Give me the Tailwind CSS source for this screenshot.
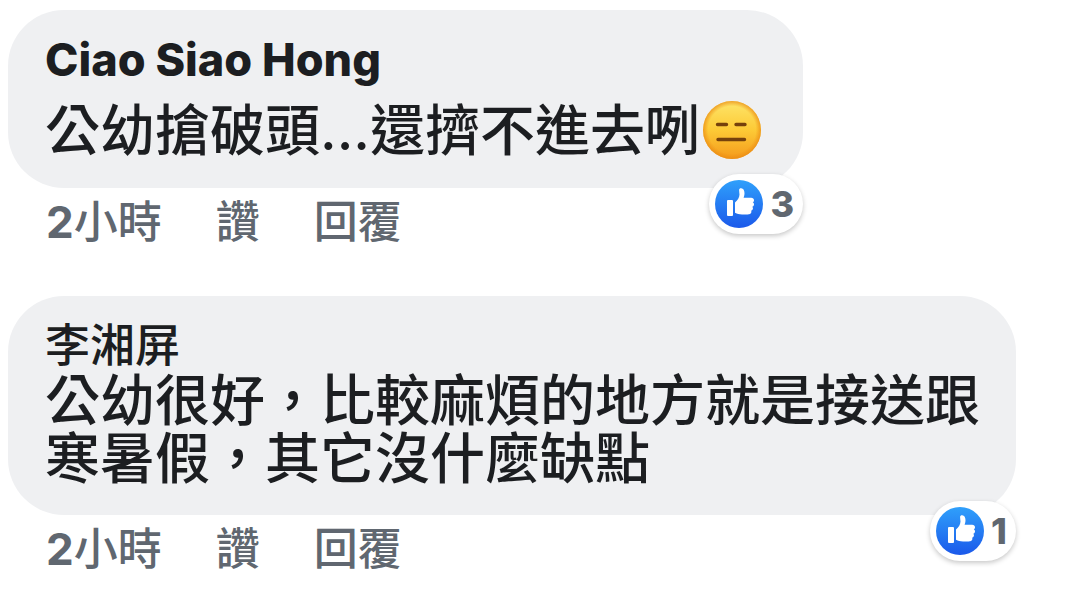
<!DOCTYPE html>
<html lang="zh-Hant">
<head>
  <meta charset="UTF-8" />
  <meta name="viewport" content="width=device-width, initial-scale=1.0"/>
  <title>留言</title>
  <script src="https://cdn.jsdelivr.net/npm/@tailwindcss/browser@4"></script>
</head>
<body class="bg-white font-['Inter','Noto_Sans_CJK_TC',sans-serif] text-[#1c1e21]">

  <!-- Shared icon -->
  <svg class="absolute size-0" aria-hidden="true">
    <defs>
      <linearGradient id="like-bg" x1="0" y1="0" x2="0" y2="1">
        <stop offset="0" stop-color="#2fa0fb"/>
        <stop offset="1" stop-color="#1b59ea"/>
      </linearGradient>
    </defs>
    <symbol id="like" viewBox="0 0 48 48">
      <circle cx="24" cy="24" r="24" fill="url(#like-bg)"/>
      <rect x="12" y="20" width="6" height="16" rx="1" fill="#fff"/>
      <path fill="#fff" d="M20 22.500c2.500-2 4.400-4.700 4.500-8 0-1.200-.4-2.700-.4-4.200 0-1.500 1-2.100 2.100-2 2.300.2 3.300 2.400 3.300 5 0 1.800-.5 3.200-.9 4.400h7.600c1.700 0 2.800 1.100 2.800 2.500 0 1-.5 1.700-1.200 2.100.8.500 1.300 1.300 1.200 2.300-.1 1.100-.8 1.900-1.700 2.200.5.500.8 1.200.6 2-.2 1.100-1 1.700-1.800 1.900.3.500.4 1.100.2 1.800-.4 1.300-1.700 1.900-3.700 1.900H27c-3 0-4.800-.6-7-1.600z"/>
    </symbol>
  </svg>

  <main class="flex flex-col items-start gap-[50px] pt-[10px] pl-2">

    <article>
      <div class="relative w-fit rounded-[56px] bg-[#eff0f2] pt-[26px] pr-10 pb-7 pl-[37px]">
        <h2 class="text-[45px] leading-[48px] font-extrabold">Ciao Siao Hong</h2>
        <p class="mt-4 flex items-center text-[55px] leading-[60px] font-medium">
          公幼搶破頭...還擠不進去咧
          <svg class="ml-[3px] size-[60px]" viewBox="0 0 60 60" role="img" aria-label="無言">
            <defs>
              <linearGradient id="face" x1="0" y1="0" x2="0" y2="1">
                <stop offset="0" stop-color="#fde56a"/>
                <stop offset=".5" stop-color="#fdca36"/>
                <stop offset="1" stop-color="#f49a1c"/>
              </linearGradient>
              <radialGradient id="edge">
                <stop offset=".82" stop-color="#ee8e12" stop-opacity="0"/>
                <stop offset="1" stop-color="#e98a14" stop-opacity=".75"/>
              </radialGradient>
            </defs>
            <circle cx="29" cy="30" r="29" fill="url(#face)"/>
            <circle cx="29" cy="30" r="29" fill="url(#edge)"/>
            <path d="M14.500 24.500h9M33 24.500h9M15 39.500h26.500" fill="none" stroke="#75410c" stroke-width="3.400" stroke-linecap="round"/>
          </svg>
        </p>
        <button type="button" class="absolute right-0 -bottom-[46px] flex h-[60px] items-center gap-[7px] rounded-full bg-white pr-[9px] pl-[6px] text-4xl font-extrabold text-[#606770] shadow-[0_2px_5px_rgba(0,0,0,0.22)]">
          <svg class="size-12" aria-hidden="true"><use href="#like"/></svg>
          3
        </button>
      </div>
      <footer class="mt-[10px] flex gap-[54px] px-[38px] text-[44px] leading-[48px] font-medium text-[#606770]">
        <a href="#"><span class="font-bold">2</span>小時</a>
        <button type="button">讚</button>
        <button type="button">回覆</button>
      </footer>
    </article>

    <article>
      <div class="relative w-fit rounded-[56px] bg-[#eff0f2] pt-[26px] pr-9 pb-7 pl-[37px]">
        <h2 class="text-[45px] leading-[48px] font-medium">李湘屏</h2>
        <p class="mt-px max-w-[935px] text-[55px] leading-[58px] font-medium">公幼很好，比較麻煩的地方就是接送跟寒暑假，其它沒什麼缺點</p>
        <button type="button" class="absolute right-0 -bottom-[46px] flex h-[60px] items-center gap-[7px] rounded-full bg-white pr-[9px] pl-[6px] text-4xl font-extrabold text-[#606770] shadow-[0_2px_5px_rgba(0,0,0,0.22)]">
          <svg class="size-12" aria-hidden="true"><use href="#like"/></svg>
          1
        </button>
      </div>
      <footer class="mt-[10px] flex gap-[54px] px-[38px] text-[44px] leading-[48px] font-medium text-[#606770]">
        <a href="#"><span class="font-bold">2</span>小時</a>
        <button type="button">讚</button>
        <button type="button">回覆</button>
      </footer>
    </article>

  </main>
</body>
</html>
